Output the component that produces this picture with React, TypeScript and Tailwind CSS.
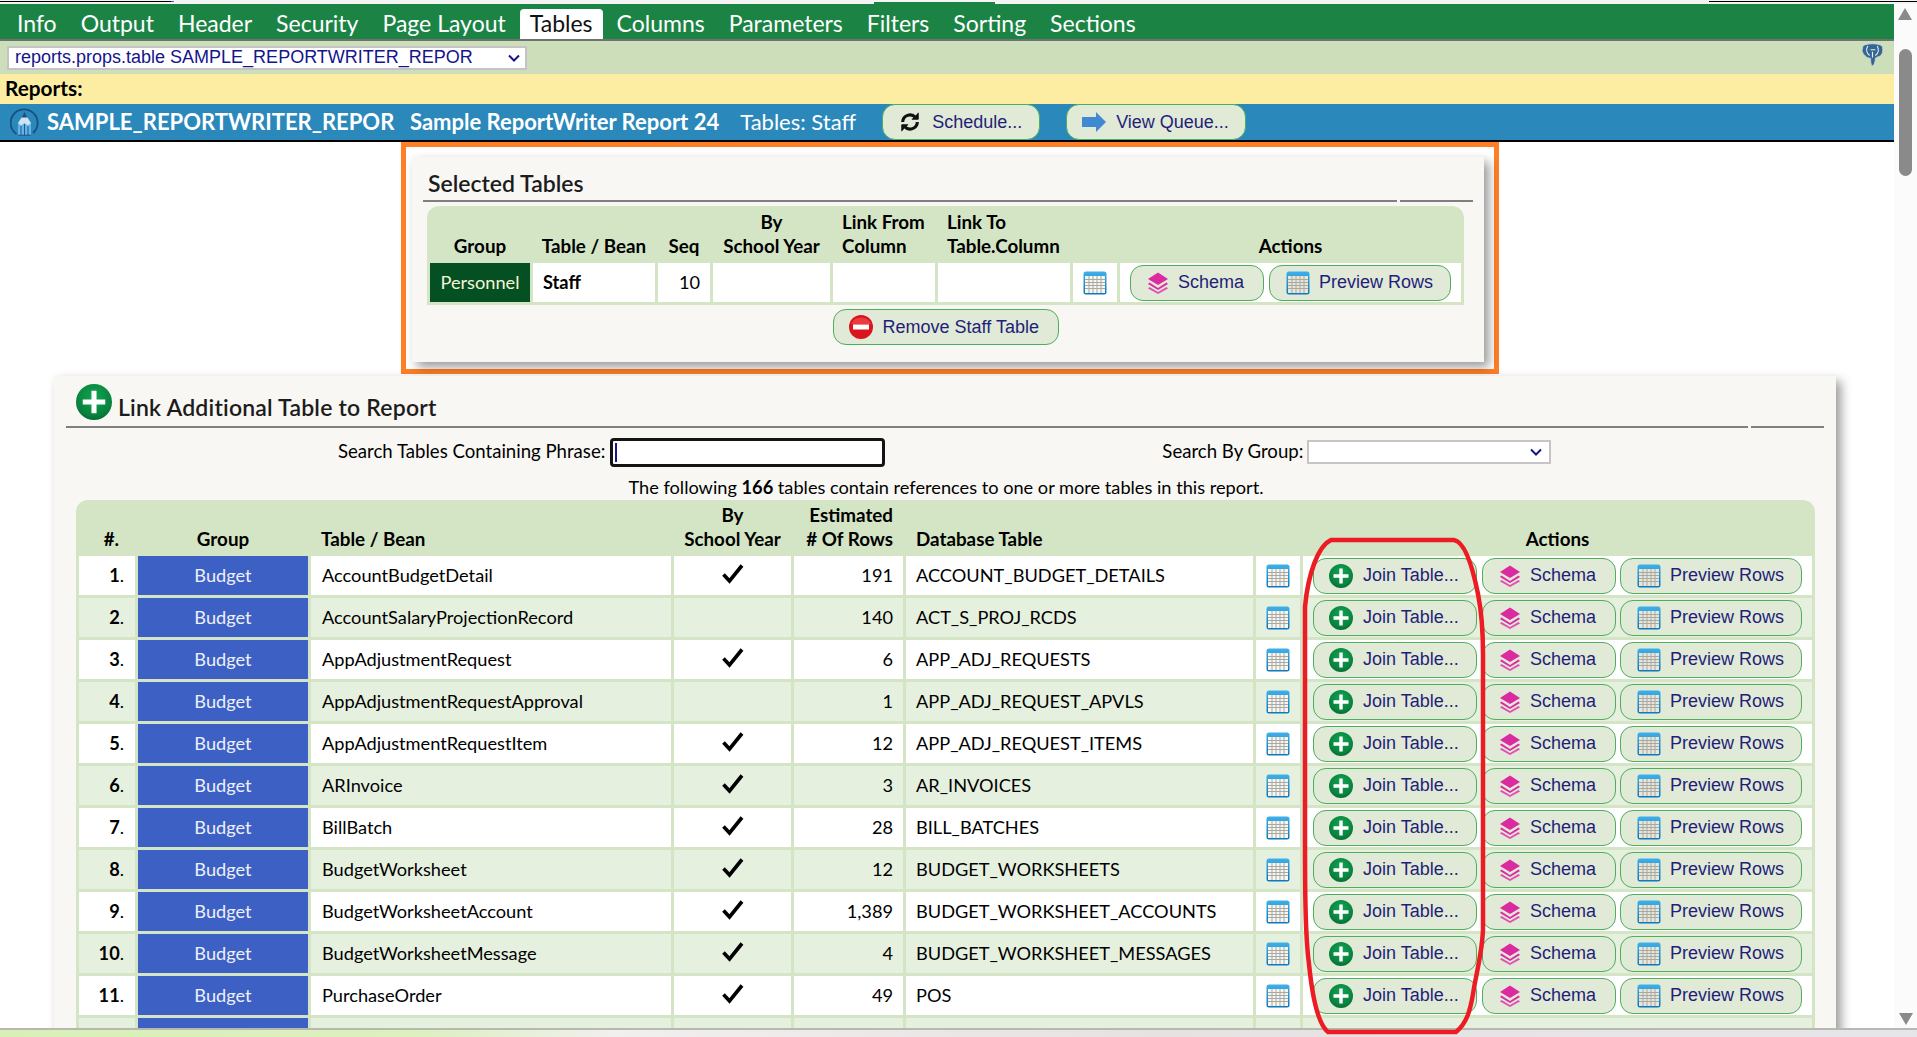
import React from "react";

const heading = "font-['Lato','Noto_Sans',sans-serif]";

const rows = [
  ["1.", "AccountBudgetDetail", true, "191", "ACCOUNT_BUDGET_DETAILS"],
  ["2.", "AccountSalaryProjectionRecord", false, "140", "ACT_S_PROJ_RCDS"],
  ["3.", "AppAdjustmentRequest", true, "6", "APP_ADJ_REQUESTS"],
  ["4.", "AppAdjustmentRequestApproval", false, "1", "APP_ADJ_REQUEST_APVLS"],
  ["5.", "AppAdjustmentRequestItem", true, "12", "APP_ADJ_REQUEST_ITEMS"],
  ["6.", "ARInvoice", true, "3", "AR_INVOICES"],
  ["7.", "BillBatch", true, "28", "BILL_BATCHES"],
  ["8.", "BudgetWorksheet", true, "12", "BUDGET_WORKSHEETS"],
  ["9.", "BudgetWorksheetAccount", true, "1,389", "BUDGET_WORKSHEET_ACCOUNTS"],
  ["10.", "BudgetWorksheetMessage", true, "4", "BUDGET_WORKSHEET_MESSAGES"],
  ["11.", "PurchaseOrder", true, "49", "POS"],
] as const;

const tabs = ["Info", "Output", "Header", "Security", "Page Layout", "Tables", "Columns", "Parameters", "Filters", "Sorting", "Sections"];

const GridIcon = ({ id, fill = "#f6f6f2" }: { id: string; fill?: string }) => (
  <svg width="24" height="24" viewBox="0 0 24 24" className="block shrink-0">
    <defs>
      <linearGradient id={id} x1="0" y1="0" x2="0" y2="1">
        <stop offset="0" stopColor="#3fb0e8" />
        <stop offset="1" stopColor="#0a78bd" />
      </linearGradient>
    </defs>
    <rect x="0.5" y="0.5" width="23" height="23" rx="2.5" fill={`url(#${id})`} />
    <rect x="2" y="5" width="20" height="17" fill={fill} />
    <path d="M2 8.5h20M2 11.5h20M2 14.5h20M2 17.5h20M6 5v17M10 5v17M14 5v17M18 5v17" stroke="#a9a9a2" strokeWidth="1" fill="none" />
  </svg>
);

const LayersIcon = () => (
  <svg width="22" height="22" viewBox="0 0 22 22" className="block shrink-0">
    <path d="M11 0.5 21 7 11 13 1 7Z" fill="#dc2ba0" />
    <path d="M2.5 10.5 11 16 19.5 10.5 21 12 11 18 1 12Z" fill="#dc2ba0" />
    <path d="M2.5 15 11 20 19.5 15 21 16.5 11 22 1 16.5Z" fill="#e24fb3" />
  </svg>
);

const PlusIcon = ({ size, id }: { size: number; id: string }) => (
  <svg width={size} height={size} viewBox="0 0 24 24" className="block shrink-0">
    <defs>
      <radialGradient id={id} cx="0.5" cy="0.35" r="0.75">
        <stop offset="0" stopColor="#0fa552" />
        <stop offset="0.7" stopColor="#08813c" />
        <stop offset="1" stopColor="#045d2a" />
      </radialGradient>
    </defs>
    <circle cx="12" cy="12" r="12" fill={`url(#${id})`} />
    <path d="M12 4.5v15M4.5 12h15" stroke="#fff" strokeWidth="3.4" />
  </svg>
);

const MinusIcon = () => (
  <svg width="24" height="24" viewBox="0 0 24 24" className="block shrink-0">
    <circle cx="12" cy="12" r="12" fill="#d9141f" />
    <path d="M2 9a11 11 0 0 1 20 0Z" fill="#ec3b3f" />
    <rect x="4" y="9.5" width="16" height="5" fill="#fff" />
  </svg>
);

const Pill = ({ w, icon, children, className = "" }: { w: string; icon: React.ReactNode; children: React.ReactNode; className?: string }) => (
  <button className={`${w} ${className} h-9 flex items-center rounded-[13px] border border-[#4dae5c] bg-[#e1e9d7] text-[#1f1f78] text-[18px] font-['Liberation_Sans',Arial,sans-serif] whitespace-nowrap`}>
    {icon}
    {children}
  </button>
);

const ActionButtons = ({ k }: { k: string }) => (
  <>
    <Pill w="w-[134px]" className="pl-4 gap-[9px]" icon={<LayersIcon />}>Schema</Pill>
    <Pill w="w-[182px]" className="pl-4 gap-[9px]" icon={<GridIcon id={`p${k}`} fill="#e6e6da" />}>Preview Rows</Pill>
  </>
);

const SectionLine = () => (
  <div className="flex gap-[3px]">
    <div className="h-[2px] flex-1 bg-[#807e7e]" />
    <div className="h-[2px] w-[73px] bg-[#807e7e]" />
  </div>
);

const Check = () => (
  <svg width="24" height="20" viewBox="0 0 24 20" className="mx-auto block -mt-1">
    <path d="M2.5 10.5 8.5 17 21 1.5" fill="none" stroke="#000" strokeWidth="3.6" />
  </svg>
);

const SelectedTables = () => (
  <div className="ml-[401px] w-[1098px] h-[232px] border-[5px] border-[#ff7f27] pt-[10px] pl-[6px]">
    <div className="w-[1072px] h-[205px] bg-[#f8f7f3] shadow-[5px_5px_10px_rgba(0,0,0,0.4)] px-[11px]">
      <h2 className={`${heading} text-[23px] pt-[10px] leading-[33px] text-[#1c1c1c] pl-[5px] font-semibold`}>Selected Tables</h2>
      <SectionLine />
      <div className="pl-[4px] pt-[4px]">
        <table className={`${heading} w-[1037px] table-fixed border-separate border-spacing-[3px] bg-[#d4e5c5] rounded-t-xl text-[18.2px] text-black`}>
          <colgroup>
            <col className="w-[100px]" />
            <col className="w-[122px]" />
            <col className="w-[52px]" />
            <col className="w-[117px]" />
            <col className="w-[102px]" />
            <col className="w-[132px]" />
            <col className="w-[44px]" />
            <col />
          </colgroup>
          <thead>
            <tr className="h-[51px] align-bottom text-[18.8px] leading-[24px]">
              <th className="font-bold pb-[2px]">Group</th>
              <th className="font-bold pb-[2px]">Table / Bean</th>
              <th className="font-bold pb-[2px]">Seq</th>
              <th className="font-bold pb-[2px]">By<br />School Year</th>
              <th className="font-bold pb-[2px] text-left pl-[9px]">Link From<br />Column</th>
              <th className="font-bold pb-[2px] text-left pl-[9px]">Link To<br />Table.Column</th>
              <th />
              <th className="font-bold pb-[2px]">Actions</th>
            </tr>
          </thead>
          <tbody>
            <tr className="h-[39px] bg-white">
              <td className="bg-[#055023] text-[#f5f5d8] text-center">Personnel</td>
              <td className="pl-[10px] font-bold">Staff</td>
              <td className="text-right pr-[10px]">10</td>
              <td />
              <td />
              <td />
              <td><div className="flex justify-center"><GridIcon id="s0" /></div></td>
              <td className="pl-[10px]">
                <div className="flex gap-[5px]"><ActionButtons k="s1" /></div>
              </td>
            </tr>
          </tbody>
        </table>
        <div className="flex justify-center w-[1037px] pt-[4px]">
          <Pill w="w-[226px]" className="pl-[15px] gap-[10px]" icon={<MinusIcon />}>Remove Staff Table</Pill>
        </div>
      </div>
    </div>
  </div>
);

const LinkTables = () => (
  <div className={`${heading} ml-[54px] mt-[2px] w-[1782px] h-[900px] bg-[#f8f7f3] shadow-[5px_5px_10px_rgba(0,0,0,0.4)] px-[12px] text-[18.2px] text-black`}>
    <div className="flex items-center h-[50px] pl-[10px] pt-[1px]">
      <PlusIcon size={36} id="linkplus" />
      <h2 className="text-[23px] tracking-[0.2px] font-semibold text-[#1c1c1c] pl-[6px] pt-[11px]">Link Additional Table to Report</h2>
    </div>
    <SectionLine />
    <div className="flex h-[48px] items-center">
      <label className="ml-[272px] text-[18.6px]">Search Tables Containing Phrase:</label>
      <div className="ml-[5px] w-[275px] h-[29px] rounded-[4px] border-[3px] border-[#141414] bg-white flex items-center pl-[2px]">
        <div className="w-[2px] h-[19px] bg-[#14148c]" />
      </div>
      <label className="ml-[277px] text-[18.6px]">Search By Group:</label>
      <div className="ml-[4px] w-[244px] h-[24px] bg-white border-2 border-[#c5c5c5] flex items-center justify-end pr-[7px]">
        <svg width="12" height="8" viewBox="0 0 12 8"><path d="M1 1.5 6 6.5 11 1.5" fill="none" stroke="#14148c" strokeWidth="2" /></svg>
      </div>
    </div>
    <div className="text-center h-[24px] leading-[22px] pl-[2px]">
      The following <b>166</b> tables contain references to one or more tables in this report.
    </div>
    <div className="pl-[10px]">
      <table className="w-[1739px] table-fixed border-separate border-spacing-[3px] bg-[#d4e5c5] rounded-t-xl">
        <colgroup>
          <col className="w-[56px]" />
          <col className="w-[170px]" />
          <col className="w-[360px]" />
          <col className="w-[117px]" />
          <col className="w-[109px]" />
          <col className="w-[347px]" />
          <col className="w-[44px]" />
          <col />
        </colgroup>
        <thead>
          <tr className="h-[50px] align-bottom text-[18.8px] leading-[24px]">
            <th className="font-bold pb-[2px] text-right pr-[16px]">#.</th>
            <th className="font-bold pb-[2px]">Group</th>
            <th className="font-bold pb-[2px] text-left pl-[10px]">Table / Bean</th>
            <th className="font-bold pb-[2px]">By<br />School Year</th>
            <th className="font-bold pb-[2px] text-right pr-[10px]">Estimated<br /># Of Rows</th>
            <th className="font-bold pb-[2px] text-left pl-[10px]">Database Table</th>
            <th />
            <th className="font-bold pb-[2px]">Actions</th>
          </tr>
        </thead>
        <tbody>
          {rows.map(([num, bean, sy, count, db], i) => (
            <tr key={num} className={`h-[39px] ${i % 2 === 0 ? "bg-white" : "bg-[#e6f0df]"}`}>
              <td className="text-right pr-[11px]"><b>{num.slice(0, -1)}</b>.</td>
              <td className="bg-[#3c60c4] text-[#eef0fa] text-center">Budget</td>
              <td className="pl-[11px]">{bean}</td>
              <td>{sy && <Check />}</td>
              <td className="text-right pr-[10px]">{count}</td>
              <td className="pl-[10px]">{db}</td>
              <td><div className="flex justify-center"><GridIcon id={`g${i}`} /></div></td>
              <td>
                <div className="flex pl-[10px]">
                  <Pill w="w-[164px]" className="pl-[15px] gap-[10px] mr-[5px]" icon={<PlusIcon size={24} id={`j${i}`} />}>Join Table...</Pill>
                  <div className="flex gap-[4px]"><ActionButtons k={`r${i}`} /></div>
                </div>
              </td>
            </tr>
          ))}
          <tr className="h-[39px] bg-[#e6f0df]">
            <td />
            <td className="bg-[#3c60c4]" />
            <td />
            <td />
            <td />
            <td />
            <td />
            <td />
          </tr>
        </tbody>
      </table>
    </div>
  </div>
);

export default function App() {
  return (
    <div className="relative h-[1037px] w-[1917px] overflow-hidden bg-white font-['Liberation_Sans',Arial,sans-serif]">
      {/* leftovers of the window above, visible along the top edge */}
      <div className="flex h-[4px] items-start bg-[#f4f4f4]">
        <div className="mt-[1px] h-[1px] w-[171px] bg-black" />
        <div className="mt-[1px] h-[1px] w-[3px] bg-[#3c60c4]" />
        <div className="ml-[700px] mt-[2px] h-[2px] w-[121px] bg-[#1b8445]" />
        <div className="ml-[714px] mt-[1px] h-[1px] w-[208px] bg-black" />
      </div>
      <div className="flex h-[1024px]">
        <main className="w-[1894px] overflow-hidden">
          <nav className={`${heading} flex h-[37px] items-end gap-[4px] bg-[#1b8445] border-b-2 border-[#6f7370] pl-[7px] text-[23px] text-white`}>
            {tabs.map((t) => (
              <span key={t} className={`px-[10px] h-[30px] leading-[28px] rounded-t-[4px] ${t === "Tables" ? "bg-white text-[#111]" : ""}`}>{t}</span>
            ))}
          </nav>
          <div className="flex h-[33px] items-center justify-between bg-[#cddfba] pl-[7px] pr-[10px]">
            <div className="flex w-[520px] h-[24px] items-center justify-between border-2 border-[#c4c4c4] bg-white pl-[6px] pr-[5px] text-[18px] text-[#14148c] whitespace-nowrap">
              reports.props.table SAMPLE_REPORTWRITER_REPOR
              <svg width="12" height="8" viewBox="0 0 12 8"><path d="M1 1.5 6 6.5 11 1.5" fill="none" stroke="#14148c" strokeWidth="2" /></svg>
            </div>
            <svg width="23" height="24" viewBox="0 0 24 25" className="-mt-[6px]">
              <path d="M2 3C6 0 18 0 22 3c2 5 0 10-3 11-2 1-4 1-4 2 0 3-1 7-3 8-2-1-2-5-2-8C6 16 2 12 1 8Z" fill="#336791" stroke="#c8d3da" strokeWidth="1" />
              <path d="M7 3C5 7 6 11 9 13M17 3c2 4 1 8-2 10M10 7h5M12 9v6" stroke="#e8eef2" strokeWidth="1.2" fill="none" />
            </svg>
          </div>
          <div className={`${heading} h-[30px] bg-[#fdeda2] pl-[5px] text-[20.8px] font-bold leading-[28px] text-black`}>Reports:</div>
          <div className={`${heading} flex h-[38px] items-center border-b-2 border-black bg-[#2a88bb] pl-[10px] text-white`}>
            <svg width="29" height="29" viewBox="0 0 29 29" className="shrink-0">
              <path d="M6.5 26A13.5 13.5 0 1 1 23 25" fill="none" stroke="#1b4f80" strokeWidth="1.8" />
              <path d="M8 15H21V27H8Z" fill="#63b3ea" />
              <path d="M14.5 5 21 15 18 17.5 14.5 15 11 17.5 8 15Z" fill="#cfe3f2" />
              <path d="M14.5 4 17.5 9.5H11.5Z" fill="#1b4f80" />
              <path d="M14.5 16V27M11 18V27M18 18V27M8 27.2H21" stroke="#1b4f80" strokeWidth="0.9" />
            </svg>
            <span className="ml-[8px] w-[363px] text-[22px] font-bold whitespace-nowrap pb-[1px]">SAMPLE_REPORTWRITER_REPOR</span>
            <span className="text-[22px] font-bold whitespace-nowrap pb-[1px]">Sample ReportWriter Report 24</span>
            <span className="ml-[21px] text-[22px] whitespace-nowrap pb-[1px]">Tables: Staff</span>
            <Pill w="w-[158px]" className="ml-[26px] pl-4 gap-[11px]" icon={
              <svg width="22" height="22" viewBox="0 0 24 24" fill="none" stroke="#111" strokeWidth="3.4" className="shrink-0">
                <path d="M4 12a8 8 0 0 1 14-5" />
                <path d="M20 12a8 8 0 0 1-14 5" />
                <path d="M21 2v7h-7" fill="#111" strokeWidth="1" />
                <path d="M3 22v-7h7" fill="#111" strokeWidth="1" />
              </svg>
            }>Schedule...</Pill>
            <Pill w="w-[180px]" className="ml-[26px] pl-[15px] gap-[10px]" icon={
              <svg width="24" height="20" viewBox="0 0 24 20" className="shrink-0"><path d="M0 5h14V0l10 10-10 10v-5H0Z" fill="#3f8ad2" /></svg>
            }>View Queue...</Pill>
          </div>
          <SelectedTables />
          <LinkTables />
        </main>
        <aside className="relative w-[23px] bg-[#fbfbfb]">
          <svg width="14" height="12" viewBox="0 0 14 12" className="absolute left-[4px] top-[4px]"><path d="M7 0 14 12H0Z" fill="#8a8a8a" /></svg>
          <div className="absolute left-[5px] top-[45px] h-[127px] w-[13px] rounded-[7px] bg-[#8a8a8a]" />
          <svg width="14" height="12" viewBox="0 0 14 12" className="absolute left-[5px] bottom-[3px]"><path d="M0 0H14L7 12Z" fill="#8a8a8a" /></svg>
        </aside>
      </div>
      <div className="h-[9px] border-t-2 border-[#b8b9ae] bg-[linear-gradient(90deg,#d8f0b8_0%,#dcf0c0_22%,#f0f0ee_32%,#e6e2e2_60%,#e6e6ea_100%)]" />
      {/* red marker oval drawn over the join buttons */}
      <svg width="190" height="505" viewBox="0 0 190 505" className="absolute left-[1298px] top-[534px] pointer-events-none">
        <path d="M33 6H156C168 8 176 40 180 60 184 80 185 100 185 120V396C184 420 178 440 175 460 172 478 168 490 158 498H30C20 490 14 460 11 430 7 400 7 350 7 300V73C10 40 20 12 33 6Z" fill="none" stroke="#ed1c24" strokeWidth="4.5" />
      </svg>
    </div>
  );
}
